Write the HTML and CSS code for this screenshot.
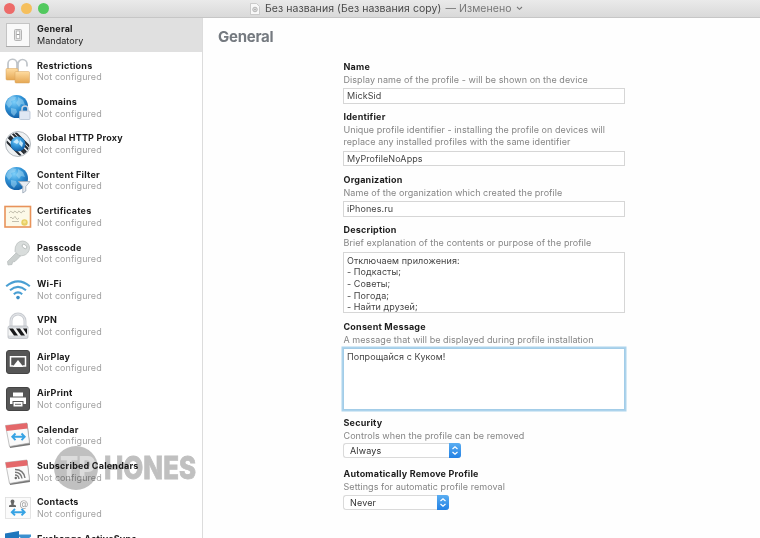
FILE: index.html
```
<!DOCTYPE html>
<html lang="ru">
<head>
	<meta charset="UTF-8">
	<title>Без названия (Без названия copy)</title>
<link rel="stylesheet" href="styles.css">
</head>
<body>
<div class="window">
	<header class="titlebar">
		<div class="lights">
			<span class="light red"></span>
			<span class="light yellow"></span>
			<span class="light green"></span>
		</div>
		<div class="title">
			<svg class="doc" viewBox="0 0 10 12"><path d="M.5.5h6l3 3v8h-9z" fill="#f8f8f8" stroke="#c2c2c2" stroke-width=".8"/><circle cx="5" cy="6.5" r="2.3" fill="#ddd" stroke="#aaa" stroke-width=".8"/><circle cx="5" cy="6.5" r=".7" fill="#999"/></svg>
			<span class="title-name">Без названия (Без названия copy)</span>
			<span class="title-state">— Изменено</span>
			<svg class="chevron" viewBox="0 0 7 5"><path d="M1 1l2.500 2.300L6 1" fill="none" stroke="#777" stroke-width="1.100"/></svg>
		</div>
	</header>

	<div class="content">
		<nav class="sidebar">
			<div class="item active">
				<svg class="icon" viewBox="0 0 28 28"><rect x="2.500" y="2.500" width="23" height="23" fill="#f9f9f9" stroke="#c4c4c4"/><path d="M2 25.500h24" stroke="#aaa"/><rect x="10.500" y="8.500" width="7" height="11" rx="1" fill="#e2e2e2" stroke="#b4b4b4"/><rect x="12.300" y="10" width="3.400" height="7.500" fill="#fff" stroke="#aaa" stroke-width=".7"/><path d="M12.500 13.500h3" stroke="#999"/></svg>
				<div class="text"><b>General</b><span>Mandatory</span></div>
			</div>
			<div class="item">
				<svg class="icon" viewBox="0 0 28 28">
					<defs><linearGradient id="gold" x2="0" y2="1"><stop offset="0" stop-color="#ffdca0"/><stop offset="1" stop-color="#e5a753"/></linearGradient></defs>
					<path d="M4 13V7a4.500 4.500 0 0 1 9-.5V13M14 15V7a4.500 4.500 0 0 1 9 0v2.500" fill="none" stroke="#bfc4c9" stroke-width="1.700"/>
					<rect x="2" y="11.500" width="12" height="11.500" rx="1" fill="url(#gold)" stroke="#d6a25c" stroke-width=".5"/>
					<rect x="11" y="14.500" width="14.500" height="11.500" rx="1" fill="url(#gold)" stroke="#d6a25c" stroke-width=".5"/>
				</svg>
				<div class="text"><b>Restrictions</b><span>Not configured</span></div>
			</div>
			<div class="item">
				<svg class="icon" viewBox="0 0 28 28">
					<defs>
						<radialGradient id="sea" cx=".4" cy=".3" r=".75"><stop offset="0" stop-color="#7fd0fa"/><stop offset=".5" stop-color="#2f92d6"/><stop offset="1" stop-color="#0f589f"/></radialGradient>
						<g id="globe"><circle cx="12.500" cy="12.500" r="11.500" fill="url(#sea)"/><path d="M2 10q1-5 6-8l4 1-1 3-4 1 1 3-3 4zM14 3l5 3 2 5-4-1-2 3-3-4 2-3zM7 14l5 1 1 3-3 4-3-3z" fill="#a9dcf6" opacity=".5"/></g>
					</defs>
					<use href="#globe"/>
					<path d="M18 17v-2a3 3 0 0 1 6 0v3" fill="none" stroke="#c9d3e2" stroke-width="1.500"/>
					<rect x="15.500" y="17" width="10.500" height="8.500" rx="1" fill="#dfe7f3" stroke="#b4c0d2" stroke-width=".8"/>
				</svg>
				<div class="text"><b>Domains</b><span>Not configured</span></div>
			</div>
			<div class="item">
				<svg class="icon" viewBox="0 0 28 28">
					<defs><clipPath id="disc"><circle cx="14" cy="14" r="11.500"/></clipPath></defs>
					<circle cx="14" cy="14" r="12.500" fill="#eef1f3" stroke="#b3b9be"/>
					<g clip-path="url(#disc)"><path d="M0 0l30 30M8-1l30 30M-8 1l30 30M4-1l30 30M-4-1l30 30" transform="translate(0 0)" stroke="#252a30" stroke-width="2"/></g>
					<circle cx="14" cy="14" r="7.500" fill="url(#sea)"/><path d="M9 12l4-3 2 3-2 2zM16 10l3 3-1 4-3-3z" fill="#c5e9fc"/>
				</svg>
				<div class="text"><b>Global HTTP Proxy</b><span>Not configured</span></div>
			</div>
			<div class="item">
				<svg class="icon" viewBox="0 0 28 28">
					<use href="#globe"/>
					<path d="M14.500 15.500h11.500l-4.200 5v4.500l-3 2v-6.500z" fill="#e6ebf1" stroke="#a2aebb" stroke-width=".9"/>
				</svg>
				<div class="text"><b>Content Filter</b><span>Not configured</span></div>
			</div>
			<div class="item">
				<svg class="icon" viewBox="0 0 28 28"><rect x="1" y="3.500" width="25.500" height="20.500" fill="#fcf9e8" stroke="#e8935a" stroke-width="1.600"/><path d="M5 10q1.500-3 3-1t2 0 2 0 2 0 2 0 2 0 3-.5M6 15q1-2 2 0t2-.5 2 .5 3 0M8 18.500h7" fill="none" stroke="#aaa697" stroke-width=".7"/><circle cx="20.500" cy="19.500" r="3.200" fill="#e8cf63"/><circle cx="20.500" cy="19" r="1.500" fill="#f4e391"/></svg>
				<div class="text"><b>Certificates</b><span>Not configured</span></div>
			</div>
			<div class="item">
				<svg class="icon" viewBox="0 0 28 28"><path d="M12 14l-8.500 8.500.5 3.500 4-.5.5-2.500 2.500-.5 5.500-5.500z" fill="#cbd0cf" stroke="#b4baba" stroke-width=".7"/><path d="M13.500 4q5-4 10 0 4 5 0 10-3 3.500-8.500 2.500l-4-4q-.5-5 2.500-8.500z" fill="#d9dddc" stroke="#bbc0bf" stroke-width=".8"/><ellipse cx="20.500" cy="7.500" rx="2.700" ry="1.700" transform="rotate(40 20.500 7.500)" fill="#fff" stroke="#a6adac" stroke-width=".7"/></svg>
				<div class="text"><b>Passcode</b><span>Not configured</span></div>
			</div>
			<div class="item">
				<svg class="icon" viewBox="0 0 28 28"><g fill="none" stroke="#4a9fd3" stroke-width="2.100"><path d="M2.200 10.200q11.800-9.800 23.600 0"/><path d="M6 14.200q8-6.600 16 0"/><path d="M9.800 18.200q4.200-3.500 8.400 0"/></g><circle cx="14" cy="21.600" r="1.800" fill="#3c8fc6"/></svg>
				<div class="text"><b>Wi-Fi</b><span>Not configured</span></div>
			</div>
			<div class="item">
				<svg class="icon" viewBox="0 0 28 28"><path d="M7 15V9a7 7 0 0 1 14 0V15" fill="none" stroke="#c9ccd1" stroke-width="3"/><path d="M7 15V9a7 7 0 0 1 14 0V15" fill="none" stroke="#e8eaed" stroke-width="1"/><rect x="4" y="14" width="20" height="12.500" rx="1.500" fill="#d7dade" stroke="#b4b8bd" stroke-width=".7"/><rect x="4.500" y="16.500" width="19" height="7" fill="#f5f5f5"/><path d="M5 16.500h4l5 7h-4zM12 16.500h4l5 7h-4zM19 16.500h4v6z" fill="#18191b"/></svg>
				<div class="text"><b>VPN</b><span>Not configured</span></div>
			</div>
			<div class="item">
				<svg class="icon" viewBox="0 0 28 28"><rect x="2.500" y="2.500" width="23" height="23" rx="2.500" fill="#565656" stroke="#444"/><path d="M9.500 18H6.500V8.800h15V18h-3" fill="none" stroke="#fff" stroke-width="1.500"/><path d="M14 12l5.500 7h-11z" fill="#fff"/></svg>
				<div class="text"><b>AirPlay</b><span>Not configured</span></div>
			</div>
			<div class="item">
				<svg class="icon" viewBox="0 0 28 28"><rect x="2.500" y="2.500" width="23" height="23" rx="2.500" fill="#565656" stroke="#444"/><path d="M9 7.500h10v4H9zM6 12.500h16v6.500h-2.500v-3h-11v3H6z" fill="#fff"/><path d="M9.500 17h9v4.500h-9z" fill="#fff"/><path d="M11 19.300h6" stroke="#666"/></svg>
				<div class="text"><b>AirPrint</b><span>Not configured</span></div>
			</div>
			<div class="item">
				<svg class="icon" viewBox="0 0 28 28">
					<defs><g id="cal"><path d="M3 6l20.500-3L26 24 6 27z" fill="#777"/><path d="M1.500 4.500l21.500-2.500 2.500 20-20 3.500z" fill="#fafafa" stroke="#aaa" stroke-width=".7"/><path d="M1.500 4.500l21.500-2.500.7 5.500-21.200 2.500z" fill="#e4686a"/></g></defs>
					<use href="#cal"/>
					<path d="M11.500 12.500l-3.200 3.300 3.200 3.300M17.500 12.500l3.200 3.300-3.200 3.300M9 15.800h11" fill="none" stroke="#36a3e4" stroke-width="1.900"/>
				</svg>
				<div class="text"><b>Calendar</b><span>Not configured</span></div>
			</div>
			<div class="item">
				<svg class="icon" viewBox="0 0 28 28">
					<use href="#cal"/>
					<g fill="none" stroke="#777" stroke-width="1.400"><path d="M11 17q3.500 0 4 4"/><path d="M11 14.200q6 0 7 6.300"/><path d="M11 11.500q8.500 0 10 8.500"/></g><circle cx="11.800" cy="20" r="1.200" fill="#666"/>
				</svg>
				<div class="text"><b>Subscribed Calendars</b><span>Not configured</span></div>
			</div>
			<div class="item">
				<svg class="icon" viewBox="0 0 28 28"><rect x="1.500" y="3.500" width="25" height="21" fill="#fbfbfb" stroke="#dedede" stroke-width=".8"/><path d="M5 13v-1.500l2.500-1-1-3q0-2 2-2t2 2l-1 3 2.500 1V13z" fill="#666"/><text x="15.500" y="12.500" class="at">@</text><path d="M11 15l-3.200 3.200 3.200 3.200M17.500 15l3.200 3.200-3.200 3.200M8.500 18.200h11.500" fill="none" stroke="#36a3e4" stroke-width="1.900"/></svg>
				<div class="text"><b>Contacts</b><span>Not configured</span></div>
			</div>
			<div class="item">
				<svg class="icon" viewBox="0 0 28 28"><path d="M1 3.500l14-2.500v26L1 24z" fill="#1f77bd"/><path d="M15 4.500h12v18H15z" fill="#3c90cf"/><path d="M15 7l6 5 6-5" stroke="#fff" fill="none"/><path d="M10.500 9H6v10h4.500M6 14h4" stroke="#fff" stroke-width="2" fill="none"/></svg>
				<div class="text"><b>Exchange ActiveSync</b><span>Not configured</span></div>
			</div>
		</nav>

		<main class="pane">
			<h1>General</h1>
			<form class="form">
				<div class="field">
					<label>Name</label>
					<p>Display name of the profile - will be shown on the device</p>
					<div class="input">MickSid</div>
				</div>
				<div class="field">
					<label>Identifier</label>
					<p>Unique profile identifier - installing the profile on devices will<br>replace any installed profiles with the same identifier</p>
					<div class="input">MyProfileNoApps</div>
				</div>
				<div class="field">
					<label>Organization</label>
					<p>Name of the organization which created the profile</p>
					<div class="input">iPhones.ru</div>
				</div>
				<div class="field">
					<label>Description</label>
					<p>Brief explanation of the contents or purpose of the profile</p>
					<div class="input area">Отключаем приложения:<br>- Подкасты;<br>- Советы;<br>- Погода;<br>- Найти друзей;</div>
				</div>
				<div class="field">
					<label>Consent Message</label>
					<p>A message that will be displayed during profile installation</p>
					<div class="input area focus">Попрощайся с Куком!</div>
				</div>
				<div class="field">
					<label>Security</label>
					<p>Controls when the profile can be removed</p>
					<div class="select">
						<span>Always</span>
						<svg viewBox="0 0 12 15"><path d="M3.500 6L6 3.700 8.500 6M3.500 9L6 11.300 8.500 9"/></svg>
					</div>
				</div>
				<div class="field">
					<label>Automatically Remove Profile</label>
					<p>Settings for automatic profile removal</p>
					<div class="select short">
						<span>Never</span>
						<svg viewBox="0 0 12 15"><path d="M3.500 6L6 3.700 8.500 6M3.500 9L6 11.300 8.500 9"/></svg>
					</div>
				</div>
			</form>
		</main>
	</div>

	<svg class="watermark" viewBox="0 0 146 48">
		<circle cx="24" cy="24" r="22"/>
		<text x="8" y="35" textLength="36" lengthAdjust="spacingAndGlyphs" class="cut">TP</text>
		<text x="52" y="35" textLength="92" lengthAdjust="spacingAndGlyphs">HONES</text>
	</svg>
</div>
</body>
</html>
```
FILE: styles.css
```
*{
	box-sizing: border-box;
}
body{
	margin:0;
	font-family: Inter,"Liberation Sans",sans-serif;
	font-size: 9px;
	color:#222;
}
.window{
	position: relative;
	display: flex;
	flex-direction: column;
	width:760px;height:538px;
	overflow:hidden;
	background:#fefefe;
}

/* title bar */
.titlebar{
	display: flex;
	align-items: center;
	flex:none;
	height:18px;
	background:linear-gradient(#eaeaea,#d9d9d9);
	border-bottom:1px solid #c6c6c6;
}
.lights{
	display: flex;
	gap:6px;
	width:250px;
	padding-left:4px;
}
.light{
	width:11px;height:11px;
	border-radius:50%;
}
.red{background:#ed6b69;}
.yellow{background:#f5bf5d;}
.green{background:#52c95e;}
.title{
	display: flex;
	align-items: center;
	font-size: 10.5px;
	letter-spacing:.05px;
	line-height:17px;
	white-space: nowrap;
}
.title-name{
	margin-left:5px;
	color:#4a4a4a;
}
.title-state{
	margin-left:4px;
	color:#777;
}
.doc{
	width:10px;height:12px;
}
.chevron{
	width:7px;height:5px;
	margin-left:4px;
}

/* sidebar */
.content{
	display: flex;
	flex:1;
	min-height:0;
}
.sidebar{
	width:203px;
	flex:none;
	overflow:hidden;
	border-right:1px solid #dcdcdc;
	background:#fff;
}
.item{
	display: flex;
	align-items: center;
	height:36.42px;
	padding-left:4px;
}
.item.active{
	height:34px;
	margin-bottom:.9px;
	background:#e0e0e0;
}
.icon{
	width:28px;height:28px;
	flex:none;
	margin-right:5px;
}
.text{
	display: flex;
	flex-direction: column;
	line-height:11.6px;
	white-space: nowrap;
}
.text b{
	font-weight: 700;
	letter-spacing:.21px;
	color:#1c1c1c;
}
.text span{
	letter-spacing:.06px;
	color:#a2a2a2;
}
.item.active span{
	color:#222;
}
.at{
	font-size: 9px;
	fill:#999;
}

/* form */
.pane{
	flex:1;
	padding:9.5px 0 0 15px;
}
h1{
	margin:0;
	font-size: 15px;
	line-height:18px;
	font-weight: 700;
	letter-spacing:-.25px;
	color:#757a80;
}
.form{
	width:282px;
	margin:14px 0 0 125px;
}
.field{
	padding-bottom:6.5px;
}
.field label{
	display: block;
	padding-left:.5px;
	line-height:14px;
	font-weight: 700;
	letter-spacing:.2px;
	color:#1c1c1c;
}
.field p{
	margin:0 0 2.5px;
	padding-left:.5px;
	line-height:12px;
	letter-spacing:.06px;
	white-space: nowrap;
	color:#858585;
}
.input{
	height:15.5px;
	padding:0 3px;
	border:1px solid #d6d6d6;
	background:#fff;
	line-height:14.5px;
	letter-spacing:.08px;
	color:#444;
}
.area{
	height:61.7px;
	padding-top:2px;
	line-height:11.7px;
	overflow:hidden;
}
.focus{
	border-color:#a3cde8;
	box-shadow:0 0 0 1.5px #acd3ec;
}
.select{
	display: flex;
	width:118px;height:15px;
	margin-top:-1.5px;
	margin-bottom:2px;
	border:1px solid #dadada;
	border-right:0;
	border-radius:3px;
	background:#fff;
	line-height:13.5px;
	letter-spacing:.15px;
}
.select.short{
	width:106px;
	margin-top:-.5px;
}
.select span{
	flex:1;
	padding-left:6px;
	color:#333;
}
.select svg{
	width:12px;height:15px;
	margin-top:-1px;
	border-radius:0 3px 3px 0;
	background:linear-gradient(#5aaef2,#2381e4);
}
.select path{
	fill:none;
	stroke:#fff;
	stroke-width:1.2;
}

/* watermark */
.watermark{
	position: absolute;
	left:52px;top:444px;
	width:146px;height:48px;
	mix-blend-mode: multiply;
	fill:#c0c0c0;
	font-size: 31px;
	font-weight: 800;
}
.watermark text{
	stroke:#c0c0c0;
	stroke-width:.8;
}
.watermark .cut{
	fill:#dcdcdc;
	stroke:none;
}
```
